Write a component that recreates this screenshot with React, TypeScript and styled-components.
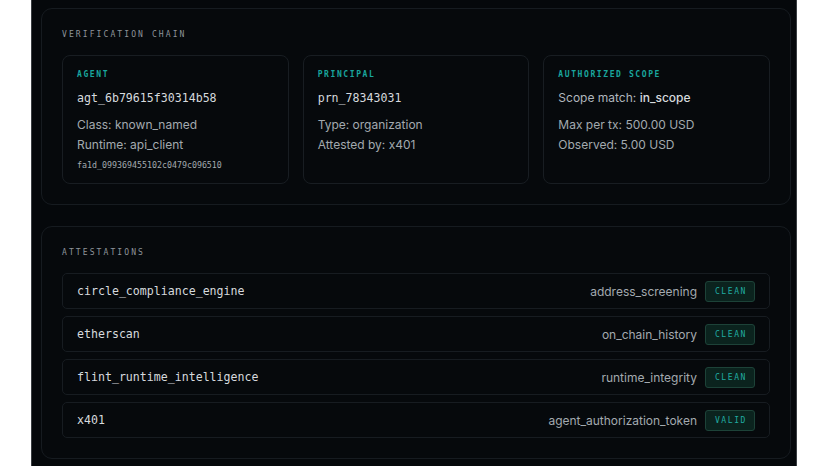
import React from 'react';
import styled, { createGlobalStyle } from 'styled-components';

const GlobalStyle = createGlobalStyle`
  html, body {
    margin: 0;
    padding: 0;
    background: #ffffff;
  }
  body {
    font-family: Inter, "Noto Sans", sans-serif;
  }
`;

const mono = `"DejaVu Sans Mono", "Liberation Mono", monospace`;

const StyledPage = styled.div`
  width: 766px;
  height: 466px;
  margin-left: 31px;
  background: #05080b;
  border-left: 1px solid #3a3e42;
  border-right: 1px solid #3a3e42;
  padding: 8px 5px 0 9px;
  box-sizing: border-box;
  display: flex;
  flex-direction: column;
  gap: 21px;
  overflow: hidden;
`;

const StyledSection = styled.section`
  border: 1px solid #161b20;
  border-radius: 11px;
  background: #06090c;
  padding: 20px;
  display: flex;
  flex-direction: column;
  gap: 14px;
`;

const StyledSectionTitle = styled.div`
  font-family: ${mono};
  font-size: 8px;
  letter-spacing: 2.1px;
  color: #8e949a;
  line-height: 12px;
`;

const StyledCardGrid = styled.div`
  display: grid;
  grid-template-columns: repeat(3, 1fr);
  gap: 14px;
`;

const StyledCard = styled.div`
  border: 1px solid #181d22;
  border-radius: 8px;
  padding: 13px 14px 12px;
  min-height: 100px;
  display: flex;
  flex-direction: column;
`;

const StyledCardLabel = styled.div`
  font-family: ${mono};
  font-weight: bold;
  font-size: 8px;
  letter-spacing: 1.6px;
  color: #19a69e;
  line-height: 12px;
  margin-bottom: 10px;
`;

const StyledIdent = styled.div`
  font-family: ${mono};
  font-size: 11.6px;
  color: #d6dade;
  line-height: 14px;
  margin-bottom: 10px;
`;

const StyledIdentSans = styled.div`
  font-size: 12px;
  color: #b0b6bc;
  line-height: 14px;
  margin-bottom: 10px;

  b {
    font-weight: 500;
    color: #d6dade;
  }
`;

const StyledLine = styled.div`
  font-size: 12px;
  color: #a3a9af;
  line-height: 20px;
`;

const StyledHash = styled.div`
  font-family: ${mono};
  font-size: 8.3px;
  color: #a3a9af;
  line-height: 12px;
  margin-top: 4px;
`;

const StyledRows = styled.div`
  display: flex;
  flex-direction: column;
  gap: 7px;
`;

const StyledRow = styled.div`
  height: 36px;
  box-sizing: border-box;
  border: 1px solid #171c21;
  border-radius: 5px;
  padding: 0 14px;
  display: flex;
  align-items: center;
  gap: 8px;
`;

const StyledSource = styled.div`
  font-family: ${mono};
  font-size: 11.6px;
  color: #d6dade;
  flex: 1;
`;

const StyledCheck = styled.div`
  font-size: 12px;
  color: #a3a9af;
`;

const StyledBadge = styled.div`
  width: 50px;
  height: 21px;
  box-sizing: border-box;
  border: 1px solid #1d4238;
  border-radius: 3px;
  background: #0b231e;
  color: #20aca2;
  font-family: ${mono};
  font-size: 8px;
  letter-spacing: 1.6px;
  display: flex;
  align-items: center;
  justify-content: center;
  padding-left: 2px;
`;

const attestations = [
  { source: 'circle_compliance_engine', check: 'address_screening', status: 'CLEAN' },
  { source: 'etherscan', check: 'on_chain_history', status: 'CLEAN' },
  { source: 'flint_runtime_intelligence', check: 'runtime_integrity', status: 'CLEAN' },
  { source: 'x401', check: 'agent_authorization_token', status: 'VALID' },
];

const App: React.FC = () => (
  <>
    <GlobalStyle />
    <StyledPage>
      <StyledSection>
        <StyledSectionTitle>VERIFICATION CHAIN</StyledSectionTitle>
        <StyledCardGrid>
          <StyledCard>
            <StyledCardLabel>AGENT</StyledCardLabel>
            <StyledIdent>agt_6b79615f30314b58</StyledIdent>
            <StyledLine>Class: known_named</StyledLine>
            <StyledLine>Runtime: api_client</StyledLine>
            <StyledHash>fa1d_099369455102c0479c096510</StyledHash>
          </StyledCard>
          <StyledCard>
            <StyledCardLabel>PRINCIPAL</StyledCardLabel>
            <StyledIdent>prn_78343031</StyledIdent>
            <StyledLine>Type: organization</StyledLine>
            <StyledLine>Attested by: x401</StyledLine>
          </StyledCard>
          <StyledCard>
            <StyledCardLabel>AUTHORIZED SCOPE</StyledCardLabel>
            <StyledIdentSans>
              Scope match: <b>in_scope</b>
            </StyledIdentSans>
            <StyledLine>Max per tx: 500.00 USD</StyledLine>
            <StyledLine>Observed: 5.00 USD</StyledLine>
          </StyledCard>
        </StyledCardGrid>
      </StyledSection>

      <StyledSection>
        <StyledSectionTitle>ATTESTATIONS</StyledSectionTitle>
        <StyledRows>
          {attestations.map((a) => (
            <StyledRow key={a.source}>
              <StyledSource>{a.source}</StyledSource>
              <StyledCheck>{a.check}</StyledCheck>
              <StyledBadge>{a.status}</StyledBadge>
            </StyledRow>
          ))}
        </StyledRows>
      </StyledSection>
    </StyledPage>
  </>
);

export default App;
